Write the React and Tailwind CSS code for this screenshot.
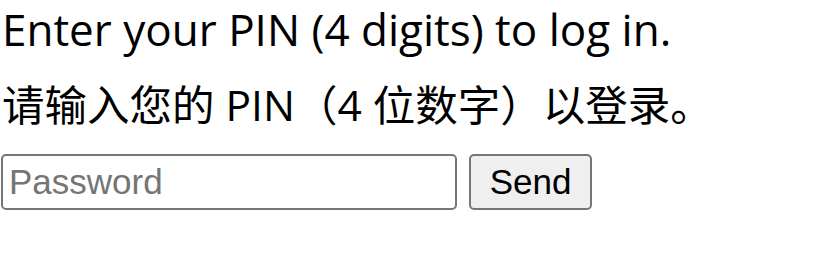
export default function App() {
  return (
    <div className="bg-white w-[813px] h-[272px] px-[2px] text-black">
      <p className="text-[44px] leading-[58px] font-['Open_Sans','Noto_Sans_CJK_SC',sans-serif]">
        Enter your PIN (4 digits) to log in.
      </p>
      <p className="mt-[18px] text-[42.5px] leading-[58px] font-['Open_Sans','Noto_Sans_CJK_SC',sans-serif]">
        请输入您的 PIN（4 位数字）以登录。
      </p>
      <form className="mt-[20px] flex items-center gap-[12px]" onSubmit={(e) => e.preventDefault()}>
        <input
          type="password"
          placeholder="Password"
          className="w-[456px] h-[56px] -ml-[1px] px-[6px] border-[2.5px] border-[#767676] rounded-[5px] text-[35px] font-['Liberation_Sans',Arial,sans-serif] placeholder:text-[#757575] outline-none"
        />
        <button
          type="submit"
          className="w-[123px] h-[56px] border-[2.5px] border-[#767676] rounded-[5px] bg-[#efefef] text-[35px] font-['Liberation_Sans',Arial,sans-serif]"
        >
          Send
        </button>
      </form>
    </div>
  );
}
